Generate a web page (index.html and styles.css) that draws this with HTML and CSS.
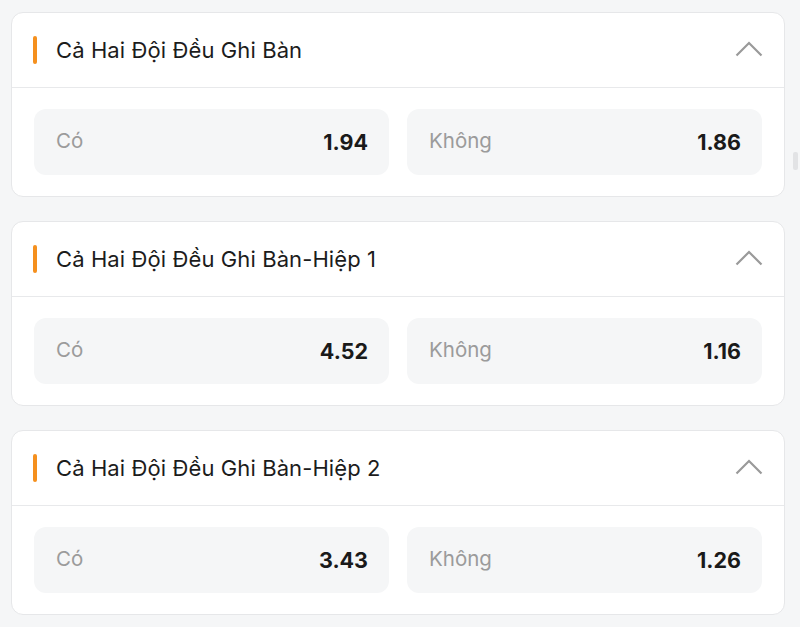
FILE: index.html
```html
<!DOCTYPE html>
<html lang="vi">
<head>
<meta charset="utf-8">
<link rel="stylesheet" href="styles.css">
</head>
<body>
<div class="page">
  <section class="card">
    <header class="card-head">
      <span class="mark"></span>
      <h2 class="title">Cả Hai Đội Đều Ghi Bàn</h2>
      <svg class="chev" width="28" height="16" viewBox="0 0 28 16"><path d="M1.5 14.5 L14 2 L26.5 14.5" fill="none" stroke="#9a9a9a" stroke-width="2.2"/></svg>
    </header>
    <div class="card-body">
      <div class="odd"><span class="lbl">Có</span><span class="val">1.94</span></div>
      <div class="odd"><span class="lbl">Không</span><span class="val">1.86</span></div>
    </div>
  </section>
  <section class="card">
    <header class="card-head">
      <span class="mark"></span>
      <h2 class="title">Cả Hai Đội Đều Ghi Bàn-Hiệp 1</h2>
      <svg class="chev" width="28" height="16" viewBox="0 0 28 16"><path d="M1.5 14.5 L14 2 L26.5 14.5" fill="none" stroke="#9a9a9a" stroke-width="2.2"/></svg>
    </header>
    <div class="card-body">
      <div class="odd"><span class="lbl">Có</span><span class="val">4.52</span></div>
      <div class="odd"><span class="lbl">Không</span><span class="val">1.16</span></div>
    </div>
  </section>
  <section class="card">
    <header class="card-head">
      <span class="mark"></span>
      <h2 class="title">Cả Hai Đội Đều Ghi Bàn-Hiệp 2</h2>
      <svg class="chev" width="28" height="16" viewBox="0 0 28 16"><path d="M1.5 14.5 L14 2 L26.5 14.5" fill="none" stroke="#9a9a9a" stroke-width="2.2"/></svg>
    </header>
    <div class="card-body">
      <div class="odd"><span class="lbl">Có</span><span class="val">3.43</span></div>
      <div class="odd"><span class="lbl">Không</span><span class="val">1.26</span></div>
    </div>
  </section>
</div>
<div class="scroll-thumb"></div>
</body>
</html>
```

FILE: styles.css
```css
* { box-sizing: border-box; }
html, body { margin: 0; padding: 0; }
body {
  background: #f5f6f7;
  font-family: Inter, "Noto Sans", "Liberation Sans", sans-serif;
  color: #1a1a1a;
  width: 800px;
  height: 627px;
  overflow: hidden;
}
.page {
  display: flex;
  flex-direction: column;
  gap: 24px;
  padding: 12px 15px 0 11px;
}
.card {
  background: #fff;
  border: 1px solid #e6e7e9;
  border-radius: 12px;
  height: 185px;
  display: flex;
  flex-direction: column;
}
.card-head {
  height: 75px;
  display: flex;
  align-items: center;
  padding: 0 21px 0 21px;
  border-bottom: 1px solid #e8e9eb;
}
.mark {
  width: 4px;
  height: 28px;
  border-radius: 2px;
  background: #f5901e;
  margin-right: 19px;
}
.title {
  flex: 1;
  margin: 0;
  font-size: 22px;
  font-weight: 400;
  letter-spacing: 0.1px;
  color: #1c1c1c;
}
.chev { display: block; margin-top: -2px; }
.card-body {
  flex: 1;
  display: flex;
  gap: 18px;
  padding: 21px 22px 0 22px;
}
.odd {
  flex: 1;
  height: 66px;
  background: #f5f6f7;
  border-radius: 12px;
  display: flex;
  align-items: center;
  justify-content: space-between;
  padding: 0 21px 0 22px;
}
.lbl {
  font-size: 20.5px;
  color: #9b9b9b;
  margin-top: -3px;
}
.val {
  font-size: 21.5px;
  font-weight: 700;
  color: #1a1a1a;
}
.scroll-thumb {
  position: absolute;
  left: 793px;
  top: 152px;
  width: 5px;
  height: 18px;
  border-radius: 2px;
  background: #e2e3e5;
}
```
